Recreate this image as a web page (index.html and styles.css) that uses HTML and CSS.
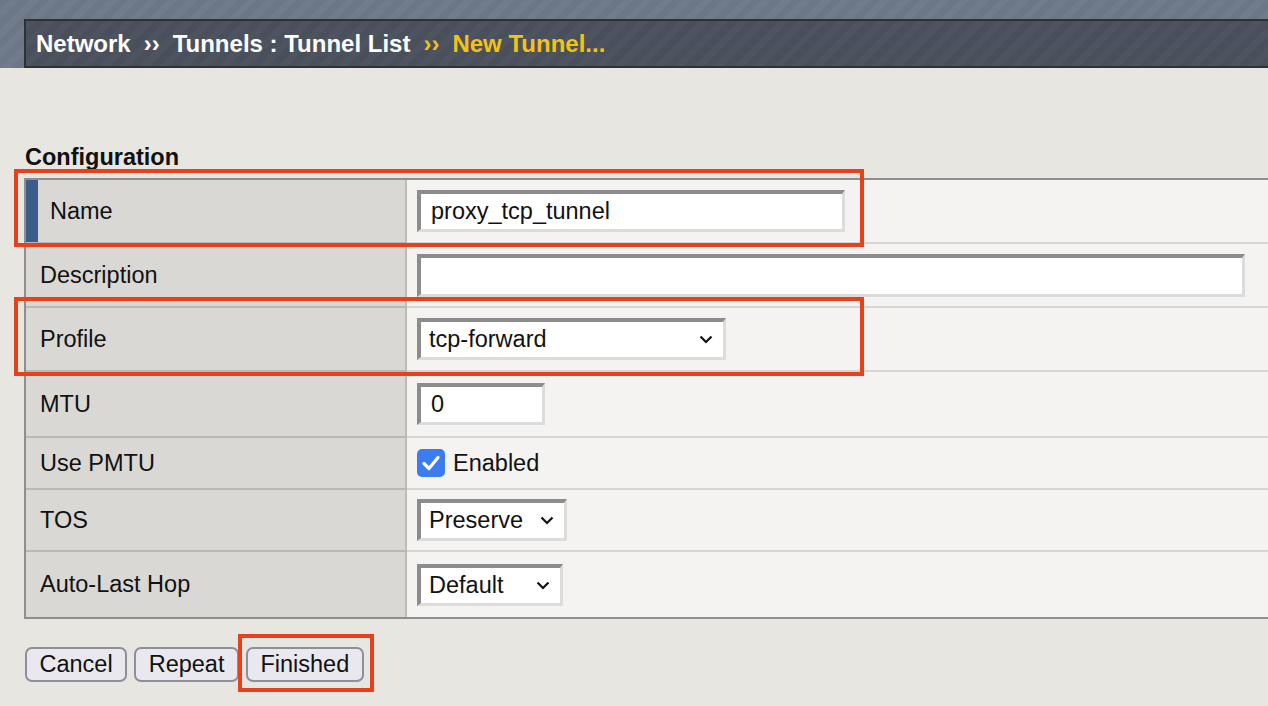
FILE: index.html
```html
<!DOCTYPE html>
<html>
<head>
<meta charset="utf-8">
<link rel="stylesheet" href="styles.css">
</head>
<body>
<div class="topband">
  <div class="crumbbar">
    <span class="crumb">Network</span>
    <span class="sep">››</span>
    <span class="crumb">Tunnels : Tunnel List</span>
    <span class="sep cur">››</span>
    <span class="crumb cur">New Tunnel...</span>
  </div>
</div>

<div class="content">
  <h2 class="section-title">Configuration</h2>
  <div class="form-wrap">
    <div class="form-table">
      <div class="row r-name">
        <div class="label marked">Name</div>
        <div class="value"><div class="field f-name">proxy_tcp_tunnel</div></div>
      </div>
      <div class="row r-desc">
        <div class="label">Description</div>
        <div class="value"><div class="field f-desc"></div></div>
      </div>
      <div class="row r-profile">
        <div class="label">Profile</div>
        <div class="value">
          <div class="field select f-profile"><span>tcp-forward</span>
            <svg class="chev" viewBox="0 0 14 9" width="14" height="9"><path d="M1.5 1.5 L7 7 L12.5 1.5" fill="none" stroke="#111" stroke-width="2.2"/></svg>
          </div>
        </div>
      </div>
      <div class="row r-mtu">
        <div class="label">MTU</div>
        <div class="value"><div class="field f-mtu">0</div></div>
      </div>
      <div class="row r-pmtu">
        <div class="label">Use PMTU</div>
        <div class="value">
          <span class="checkbox"><svg viewBox="0 0 28 28" width="28" height="28"><path d="M7 14.5 L12 19.5 L21 8.5" fill="none" stroke="#fff" stroke-width="3.2" stroke-linecap="round" stroke-linejoin="round"/></svg></span>
          <span class="check-label">Enabled</span>
        </div>
      </div>
      <div class="row r-tos">
        <div class="label">TOS</div>
        <div class="value">
          <div class="field select f-tos"><span>Preserve</span>
            <svg class="chev" viewBox="0 0 14 9" width="14" height="9"><path d="M1.5 1.5 L7 7 L12.5 1.5" fill="none" stroke="#111" stroke-width="2.2"/></svg>
          </div>
        </div>
      </div>
      <div class="row r-alh">
        <div class="label">Auto-Last Hop</div>
        <div class="value">
          <div class="field select f-alh"><span>Default</span>
            <svg class="chev" viewBox="0 0 14 9" width="14" height="9"><path d="M1.5 1.5 L7 7 L12.5 1.5" fill="none" stroke="#111" stroke-width="2.2"/></svg>
          </div>
        </div>
      </div>
    </div>

    <div class="buttons">
      <button class="btn">Cancel</button>
      <button class="btn">Repeat</button>
      <button class="btn">Finished</button>
    </div>

    <div class="hl hl-name"></div>
    <div class="hl hl-profile"></div>
    <div class="hl hl-finished"></div>
  </div>
</div>
</body>
</html>
```

FILE: styles.css
```css
* { box-sizing: border-box; }

html, body {
  margin: 0;
  padding: 0;
}

body {
  background: #e7e6e1;
  font-family: "Liberation Sans", Arial, Helvetica, sans-serif;
  color: #111;
  overflow: hidden;
  width: 1268px;
  height: 706px;
}

/* ---------- top band / breadcrumb ---------- */
.topband {
  height: 68px;
  padding-top: 19px;
  background: repeating-linear-gradient(-45deg, #6b7787 0 7px, #707c8c 7px 14px);
}

.crumbbar {
  margin-left: 24px;
  height: 49px;
  border: 2px solid #2f3135;
  border-right: none;
  background: repeating-linear-gradient(-45deg, #49505b 0 7px, #4d5460 7px 14px);
  display: flex;
  align-items: center;
  padding-left: 10px;
  padding-top: 1px;
  font-weight: bold;
  font-size: 24px;
  color: #ffffff;
  white-space: nowrap;
}

.crumbbar .sep {
  margin: 0 13px;
  font-size: 24px;
}

.crumbbar .cur {
  color: #f4c117;
}

/* ---------- content ---------- */
.content {
  padding-left: 24px;
}

.section-title {
  margin: 74px 0 0 1px;
  font-size: 23.5px;
  line-height: 30px;
  height: 36px;
  font-weight: bold;
  color: #111;
}

.form-wrap {
  position: relative;
}

.form-table {
  border-top: 2px solid #8e8e8e;
  border-bottom: 2px solid #8e8e8e;
  border-left: 2px solid #8e8e8e;
  display: flex;
  flex-direction: column;
}

.row {
  display: grid;
  grid-template-columns: 381px 1fr;
  border-bottom: 2px solid #d6d5d1;
}

.row:last-child {
  border-bottom: none;
}

.label {
  background: #d9d8d4;
  border-right: 2px solid #bdbcb8;
  box-shadow: 0 2px 0 #b9b8b4;
  display: flex;
  align-items: center;
  padding-left: 14px;
  font-size: 23.5px;
  color: #111;
}

.row:last-child .label {
  box-shadow: none;
}

.label.marked {
  border-left: 12px solid #3a5d8a;
  padding-left: 12px;
}

.value {
  background: #f4f3f1;
  display: flex;
  align-items: center;
  padding-left: 10px;
}

.r-name    { height: 64px; }
.r-desc    { height: 64px; }
.r-profile { height: 64px; }
.r-mtu     { height: 66px; }
.r-pmtu    { height: 52px; }
.r-tos     { height: 62px; }
.r-alh     { height: 65px; }

.field {
  background: #ffffff;
  border-style: solid;
  border-width: 4px 3px 3px 4px;
  border-color: #8c8c8c #dcdcdc #dcdcdc #8c8c8c;
  height: 42px;
  display: flex;
  align-items: center;
  padding-left: 10px;
  font-size: 23.5px;
  color: #111;
}

.f-name  { width: 428px; }
.f-desc  { width: 828px; height: 43px; }
.f-mtu   { width: 128px; }

.select {
  justify-content: space-between;
  padding-left: 8px;
  padding-right: 10px;
}

.f-profile { width: 309px; }
.f-tos     { width: 150px; }
.f-alh     { width: 146px; }

.chev {
  display: block;
  flex: none;
}

.checkbox {
  width: 28px;
  height: 28px;
  border-radius: 5px;
  background: #3b7cf3;
  display: inline-flex;
  align-items: center;
  justify-content: center;
}

.checkbox svg { display: block; }

.check-label {
  margin-left: 8px;
  font-size: 23.5px;
  color: #111;
}

/* ---------- buttons ---------- */
.buttons {
  display: flex;
  gap: 7px;
  margin-top: 28px;
  padding-left: 1px;
}

.btn {
  font-family: "Liberation Sans", Arial, Helvetica, sans-serif;
  font-size: 23.5px;
  color: #111;
  height: 35px;
  padding: 0 12.5px;
  background: #e9e8ee;
  border: 2px solid #8f8f9b;
  border-radius: 7px;
  line-height: 1;
}

/* ---------- annotation highlights ---------- */
.hl {
  position: absolute;
  border: 4px solid #e8401d;
}

.hl-name {
  left: -10px;
  top: -9px;
  width: 850px;
  height: 78px;
}

.hl-profile {
  left: -10px;
  top: 119px;
  width: 850px;
  height: 79px;
}

.hl-finished {
  left: 214px;
  top: 456px;
  width: 136px;
  height: 58px;
}
```
